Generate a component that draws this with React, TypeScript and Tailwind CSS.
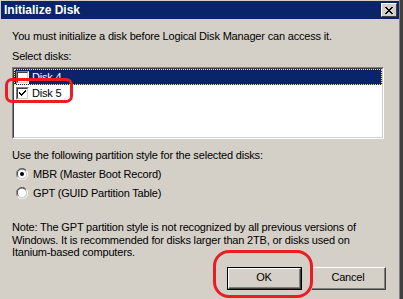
import React from "react";

const font = { fontFamily: '"Liberation Sans", Arial, sans-serif' };

function CheckBox({ checked }: { checked?: boolean }) {
  return (
    <div className="w-[13px] h-[13px] border-t border-l border-t-[#808080] border-l-[#808080] border-b border-r border-b-white border-r-white shrink-0">
      <div className="w-full h-full border-t border-l border-t-[#404040] border-l-[#404040] border-b border-r border-b-[#d4d0c8] border-r-[#d4d0c8] bg-white">
        {checked && (
          <svg width="9" height="9" viewBox="0 0 9 9" className="block">
            <path d="M1 3h1v1h1v1h1V4h1V3h1V2h1V1h1v2H7v1H6v1H5v1H4v1H3V6H2V5H1z" fill="#000" />
          </svg>
        )}
      </div>
    </div>
  );
}

function Radio({ checked }: { checked?: boolean }) {
  return (
    <svg width="12" height="12" viewBox="0 0 12 12" className="shrink-0">
      <path d="M10.5 2.5 A5.3 5.3 0 0 0 1.5 9.5" stroke="#808080" fill="none" />
      <path d="M9.5 2.5 A4.3 4.3 0 0 0 2.5 8.5" stroke="#404040" fill="none" />
      <circle cx="6" cy="6" r="4" fill="#fff" />
      <path d="M1.5 9.5 A5.3 5.3 0 0 0 10.5 2.5" stroke="#fff" fill="none" />
      <path d="M2.5 9.5 A4.3 4.3 0 0 0 9.5 3.5" stroke="#d4d0c8" fill="none" />
      {checked && <circle cx="6" cy="6" r="2" fill="#000" />}
    </svg>
  );
}

function Button({ label, isDefault }: { label: string; isDefault?: boolean }) {
  return (
    <div className={"w-[75px] h-[23px] " + (isDefault ? "border border-black" : "")}>
      <div className="w-full h-full border-t border-l border-t-white border-l-white border-b border-r border-b-[#404040] border-r-[#404040]">
        <div className="w-full h-full border-b border-r border-b-[#808080] border-r-[#808080] flex items-center justify-center text-[11px] text-black">
          {label}
        </div>
      </div>
    </div>
  );
}

export default function App() {
  return (
    <div className="relative w-[403px] h-[299px] bg-[#d4d0c8] overflow-hidden" style={font}>
      <div className="absolute right-0 top-0 bottom-0 w-[3px] bg-[#404040]" />
      <div className="absolute right-[3px] top-0 bottom-0 w-px bg-[#808080]" />

      <div className="mx-px mt-px mr-[4px] h-[18px] bg-[#0a246a] flex items-center justify-between pl-[3px] pr-[2px]">
        <span className="text-white font-bold text-[12px] leading-none">Initialize Disk</span>
        <div className="w-[16px] h-[14px] bg-[#d4d0c8] border-t border-l border-t-white border-l-white border-b border-r border-b-[#404040] border-r-[#404040] flex items-center justify-center">
          <svg width="8" height="7" viewBox="0 0 8 7">
            <path d="M0 0h2v1h1v1h2V1h1V0h2v1H7v1H6v1H5v1h1v1h1v1h1v1H6V6H5V5H3v1H2v1H0V6h1V5h1V4h1V3H2V2H1V1H0z" fill="#000" />
          </svg>
        </div>
      </div>

      <div className="pl-[12px] pr-[16px] text-[11px] text-black leading-[13px] tracking-[-0.18px]">
        <p className="mt-[11px]">You must initialize a disk before Logical Disk Manager can access it.</p>
        <p className="mt-[7px]">Select disks:</p>

        <div className="mt-[4px] w-[372px] h-[72px] border-t border-l border-t-[#808080] border-l-[#808080] border-b border-r border-b-white border-r-white">
          <div className="w-full h-full border-t border-l border-t-[#404040] border-l-[#404040] border-b border-r border-b-[#d4d0c8] border-r-[#d4d0c8] bg-white">
            <div className="h-[16px] bg-[#0a246a] border border-dotted border-[#f5deb3] flex items-center gap-[3px] pl-px">
              <CheckBox />
              <span className="text-white">Disk 4</span>
            </div>
            <div className="h-[16px] flex items-center gap-[3px] pl-[2px]">
              <CheckBox checked />
              <span>Disk 5</span>
            </div>
          </div>
        </div>

        <p className="mt-[10px]">Use the following partition style for the selected disks:</p>
        <div className="mt-[4px] ml-[4px] flex flex-col gap-[3px]">
          <label className="h-[16px] flex items-center gap-[5px]">
            <Radio checked />
            <span>MBR (Master Boot Record)</span>
          </label>
          <label className="h-[16px] flex items-center gap-[5px]">
            <Radio />
            <span>GPT (GUID Partition Table)</span>
          </label>
        </div>

        <p className="mt-[20px] leading-[12.5px]">
          Note: The GPT partition style is not recognized by all previous versions of Windows. It is recommended for disks larger than 2TB, or disks used on Itanium-based computers.
        </p>

        <div className="mt-[8px] flex justify-end gap-[9px] pr-[1px]">
          <Button label="OK" isDefault />
          <Button label="Cancel" />
        </div>
      </div>

      <div className="absolute left-[5px] top-[78px] w-[68px] h-[25px] border-[3px] border-[#ed1c24] rounded-[7px]" />
      <div className="absolute left-[213px] top-[250px] w-[100px] h-[48px] border-[3px] border-[#ed1c24] rounded-[16px]" />
    </div>
  );
}
